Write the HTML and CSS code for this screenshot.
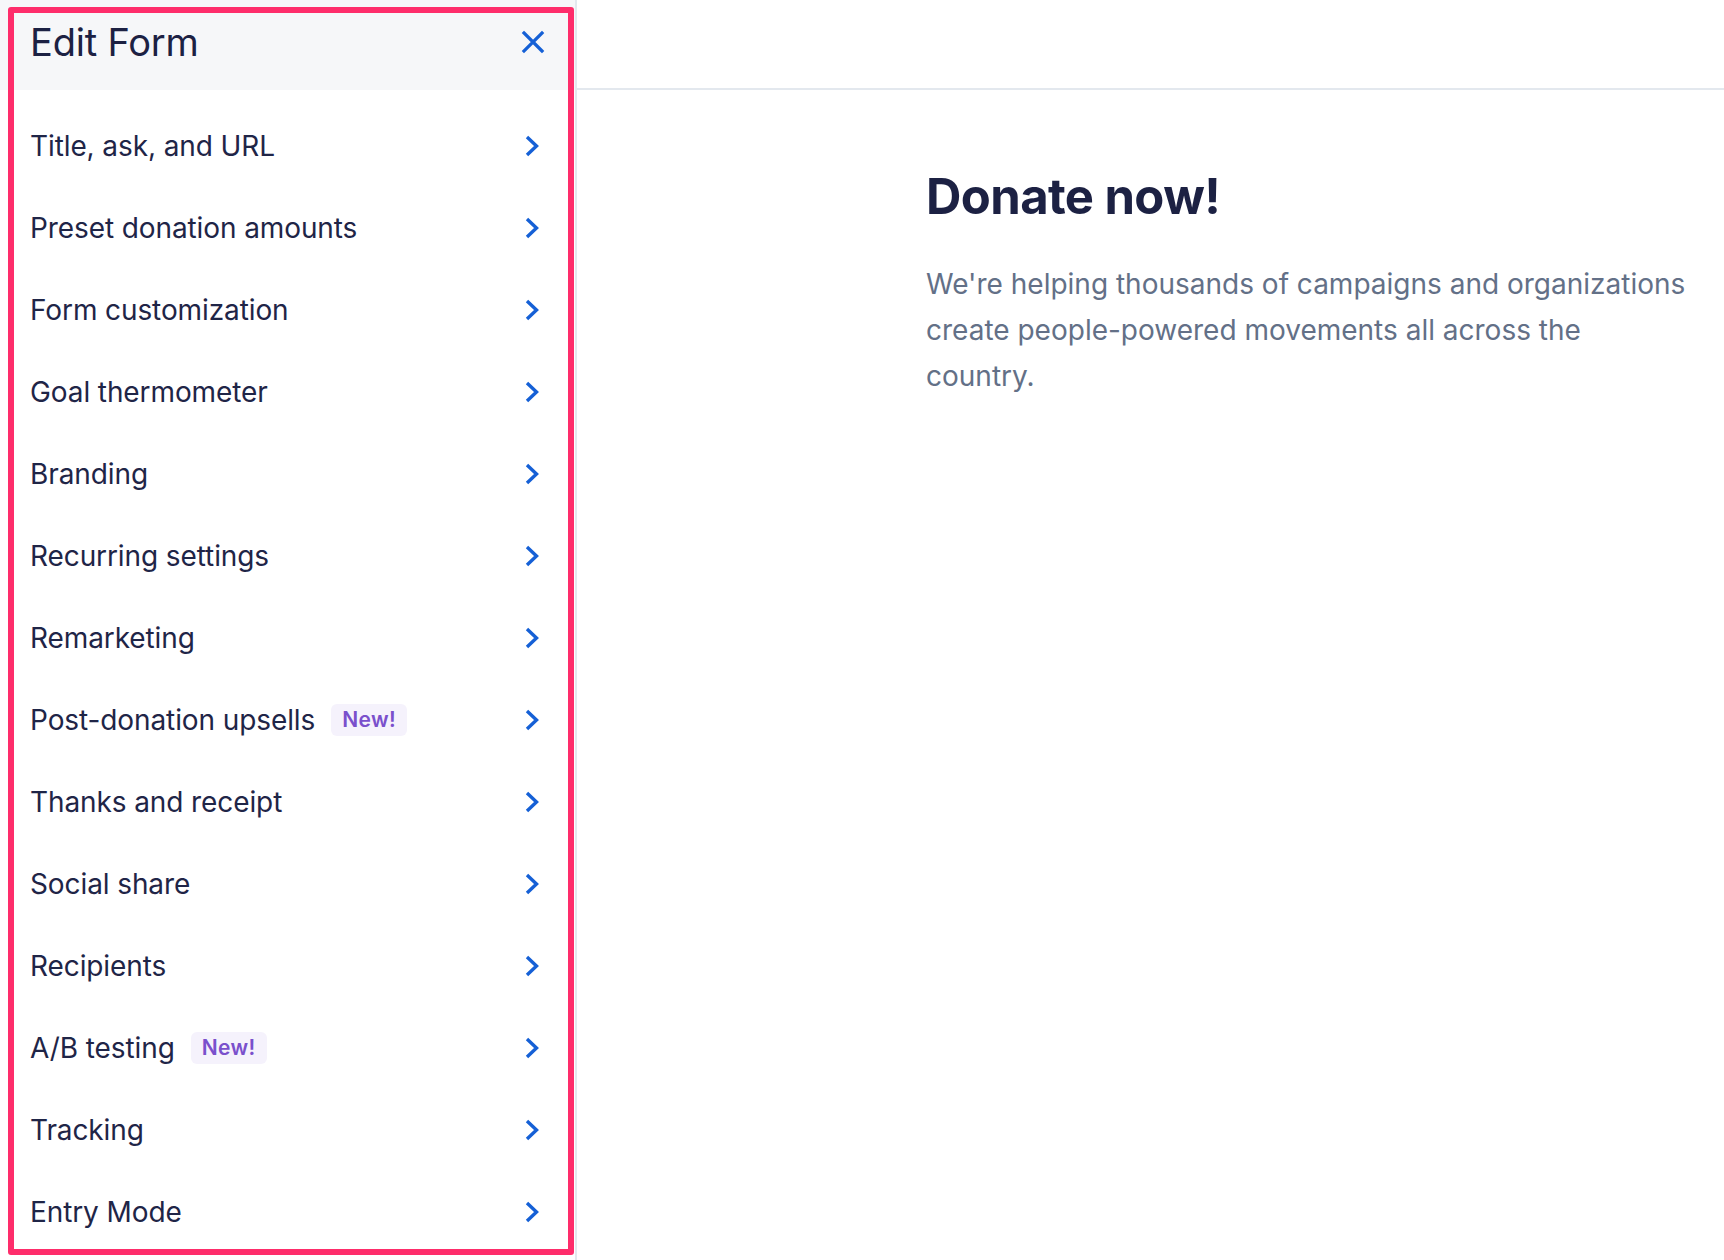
FILE: index.html
```html
<!DOCTYPE html>
<html lang="en">
<head>
<meta charset="utf-8">
<title>Edit Form</title>
<link rel="stylesheet" href="styles.css">
</head>
<body>
<div class="app">
  <aside class="sidebar">
    <header class="sidebar-head">
      <h1 class="sidebar-title">Edit Form</h1>
      <button class="close" aria-label="Close">
        <svg width="24" height="24" viewBox="0 0 24 24"><path d="M3 3 L21 21 M21 3 L3 21" fill="none" stroke="#1560d6" stroke-width="3.2" stroke-linecap="square"/></svg>
      </button>
    </header>
    <ul class="menu">
      <li class="item"><span class="label">Title, ask, and URL</span><svg class="chev" width="16" height="24" viewBox="0 0 16 24"><path d="M4 3 L13.5 12 L4 21" fill="none" stroke="#1560d6" stroke-width="3.4"/></svg></li>
      <li class="item"><span class="label">Preset donation amounts</span><svg class="chev" width="16" height="24" viewBox="0 0 16 24"><path d="M4 3 L13.5 12 L4 21" fill="none" stroke="#1560d6" stroke-width="3.4"/></svg></li>
      <li class="item"><span class="label">Form customization</span><svg class="chev" width="16" height="24" viewBox="0 0 16 24"><path d="M4 3 L13.5 12 L4 21" fill="none" stroke="#1560d6" stroke-width="3.4"/></svg></li>
      <li class="item"><span class="label">Goal thermometer</span><svg class="chev" width="16" height="24" viewBox="0 0 16 24"><path d="M4 3 L13.5 12 L4 21" fill="none" stroke="#1560d6" stroke-width="3.4"/></svg></li>
      <li class="item"><span class="label">Branding</span><svg class="chev" width="16" height="24" viewBox="0 0 16 24"><path d="M4 3 L13.5 12 L4 21" fill="none" stroke="#1560d6" stroke-width="3.4"/></svg></li>
      <li class="item"><span class="label">Recurring settings</span><svg class="chev" width="16" height="24" viewBox="0 0 16 24"><path d="M4 3 L13.5 12 L4 21" fill="none" stroke="#1560d6" stroke-width="3.4"/></svg></li>
      <li class="item"><span class="label">Remarketing</span><svg class="chev" width="16" height="24" viewBox="0 0 16 24"><path d="M4 3 L13.5 12 L4 21" fill="none" stroke="#1560d6" stroke-width="3.4"/></svg></li>
      <li class="item"><span class="label">Post-donation upsells</span><span class="badge">New!</span><svg class="chev" width="16" height="24" viewBox="0 0 16 24"><path d="M4 3 L13.5 12 L4 21" fill="none" stroke="#1560d6" stroke-width="3.4"/></svg></li>
      <li class="item"><span class="label">Thanks and receipt</span><svg class="chev" width="16" height="24" viewBox="0 0 16 24"><path d="M4 3 L13.5 12 L4 21" fill="none" stroke="#1560d6" stroke-width="3.4"/></svg></li>
      <li class="item"><span class="label">Social share</span><svg class="chev" width="16" height="24" viewBox="0 0 16 24"><path d="M4 3 L13.5 12 L4 21" fill="none" stroke="#1560d6" stroke-width="3.4"/></svg></li>
      <li class="item"><span class="label">Recipients</span><svg class="chev" width="16" height="24" viewBox="0 0 16 24"><path d="M4 3 L13.5 12 L4 21" fill="none" stroke="#1560d6" stroke-width="3.4"/></svg></li>
      <li class="item"><span class="label">A/B testing</span><span class="badge">New!</span><svg class="chev" width="16" height="24" viewBox="0 0 16 24"><path d="M4 3 L13.5 12 L4 21" fill="none" stroke="#1560d6" stroke-width="3.4"/></svg></li>
      <li class="item"><span class="label">Tracking</span><svg class="chev" width="16" height="24" viewBox="0 0 16 24"><path d="M4 3 L13.5 12 L4 21" fill="none" stroke="#1560d6" stroke-width="3.4"/></svg></li>
      <li class="item"><span class="label">Entry Mode</span><svg class="chev" width="16" height="24" viewBox="0 0 16 24"><path d="M4 3 L13.5 12 L4 21" fill="none" stroke="#1560d6" stroke-width="3.4"/></svg></li>
    </ul>
    <div class="highlight"></div>
  </aside>
  <main class="main">
    <div class="topbar"></div>
    <section class="content">
      <h2 class="headline">Donate now!</h2>
      <p class="lede">We're helping thousands of campaigns and organizations create people-powered movements all across the country.</p>
    </section>
  </main>
</div>
</body>
</html>
```

FILE: styles.css
```css
* { box-sizing: border-box; }
html, body { margin: 0; padding: 0; background: #ffffff; }
body {
  font-family: Inter, "Noto Sans", "Liberation Sans", sans-serif;
  color: #1f2547;
}
.app {
  display: flex;
  height: 1260px;
}
.sidebar {
  position: relative;
  width: 577px;
  flex: none;
  border-right: 2px solid #e3e8ee;
  background: #ffffff;
}
.sidebar-head {
  height: 90px;
  background: #f6f7f9;
  display: flex;
  align-items: center;
  justify-content: space-between;
  padding: 0 30px 6px 30px;
}
.sidebar-title {
  margin: 0;
  font-size: 38px;
  font-weight: 400;
  color: #1c2143;
  letter-spacing: -0.2px;
}
.close {
  border: 0;
  background: none;
  padding: 0;
  width: 24px;
  height: 24px;
  display: flex;
}
.menu {
  list-style: none;
  margin: 0;
  padding: 15px 0 0 0;
}
.item {
  height: 82px;
  display: flex;
  align-items: center;
  padding: 0 36px 0 30px;
  font-size: 28px;
  color: #1f2547;
}
.label { letter-spacing: -0.1px; }
.badge {
  margin-left: 16px;
  background: #f5f2fc;
  color: #7a50cc;
  font-size: 21px;
  font-weight: 600;
  letter-spacing: 0.4px;
  border-radius: 6px;
  padding: 4px 11px;
  line-height: 24px;
}
.chev { margin-left: auto; flex: none; }
.highlight {
  position: absolute;
  left: 8px;
  top: 7px;
  right: 1px;
  bottom: 5px;
  border: 6px solid #fe2d6b;
  border-radius: 3px;
  pointer-events: none;
}
.main {
  flex: 1;
  display: flex;
  flex-direction: column;
}
.topbar {
  height: 90px;
  border-bottom: 2px solid #e3e8ee;
  flex: none;
}
.content {
  padding: 77px 0 0 349px;
}
.headline {
  margin: 0;
  font-size: 49px;
  font-weight: 700;
  color: #1c2143;
  letter-spacing: -0.6px;
  line-height: 60px;
}
.lede {
  margin: 34px 0 0 0;
  max-width: 765px;
  font-size: 28px;
  line-height: 46px;
  color: #637087;
}
```
